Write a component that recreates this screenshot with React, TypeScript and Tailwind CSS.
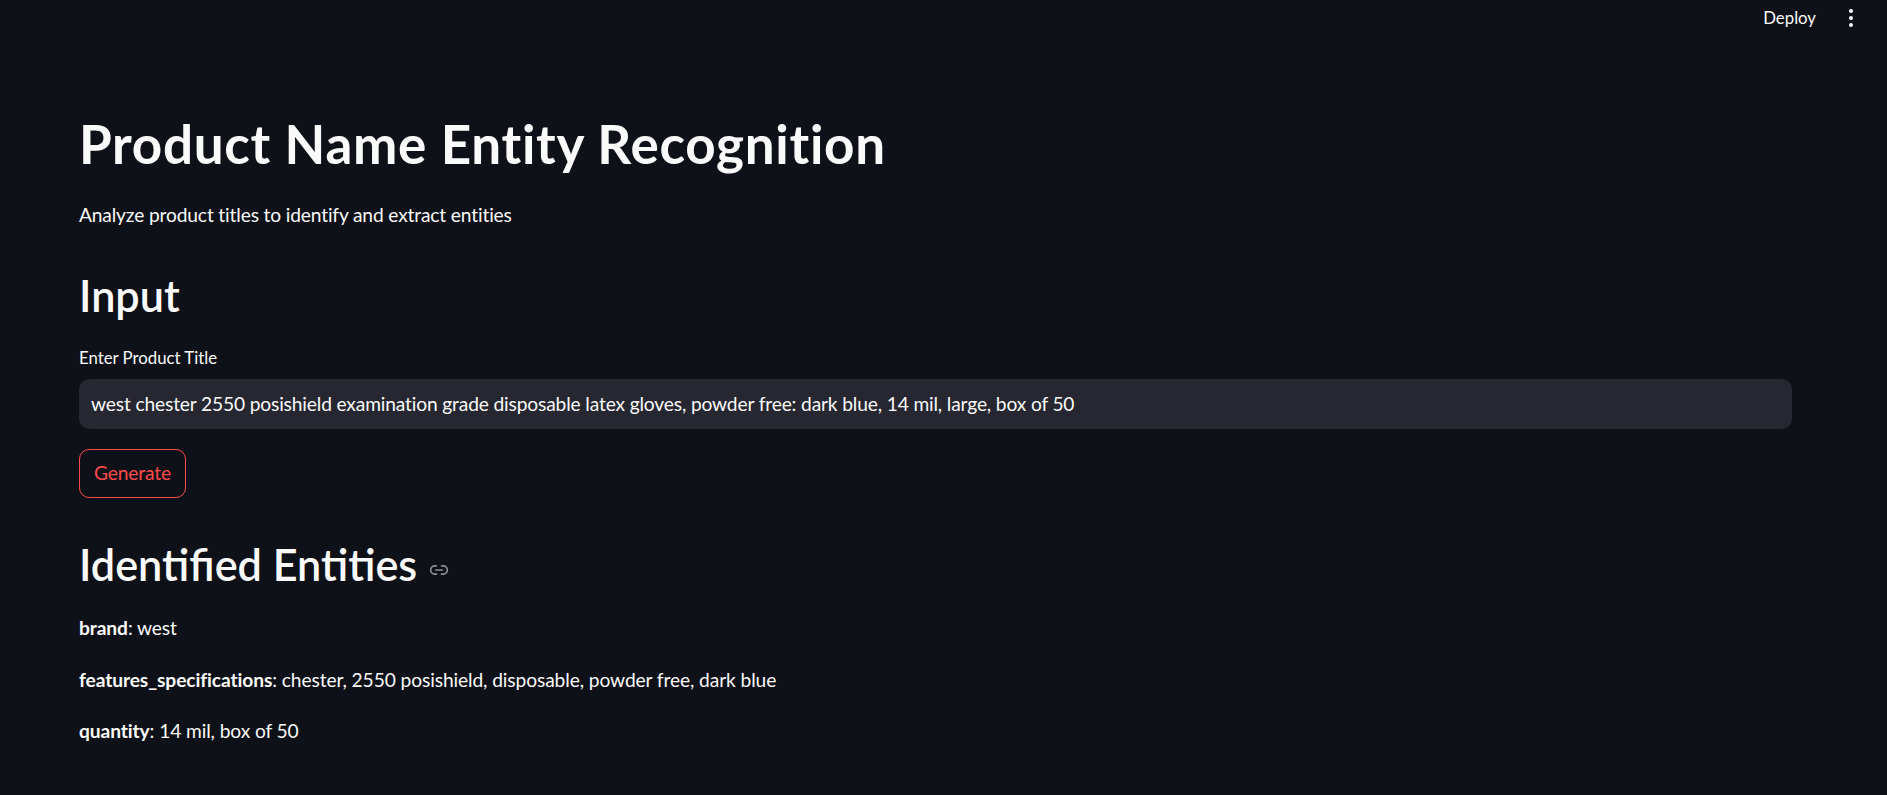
import { Link2 } from "lucide-react"

const entities = [
    { label: "brand", value: "west" },
    { label: "features_specifications", value: "chester, 2550 posishield, disposable, powder free, dark blue" },
    { label: "quantity", value: "14 mil, box of 50" },
]

const Header = () => (
    <header className="flex h-[40px] items-start justify-end pr-[27px] pt-[4px]">
        <button className="h-[28px] px-[8px] text-[16.8px] leading-[28px] text-[#fafafa]">Deploy</button>
        <button className="ml-[18px] flex h-[28px] w-[18px] flex-col items-center justify-center gap-[3px]">
            <span className="h-[4px] w-[4px] rounded-full bg-[#fafafa]" />
            <span className="h-[4px] w-[4px] rounded-full bg-[#fafafa]" />
            <span className="h-[4px] w-[4px] rounded-full bg-[#fafafa]" />
        </button>
    </header>
)

export default function App() {
    return (
        <div className="min-h-screen bg-[#0e1117] font-[Lato,sans-serif] text-[#fafafa]">
            <Header />
            <main className="pl-[79px] pr-[95px]">
                <h1 className="mt-[72px] text-[53px] font-bold leading-[1.2] tracking-[0.7px]">Product Name Entity Recognition</h1>
                <p className="mt-[24px] text-[19.2px] leading-[1.6] tracking-[-0.15px]">Analyze product titles to identify and extract entities</p>

                <h2 className="mt-[40px] text-[43.2px] font-semibold leading-[1.2]">Input</h2>
                <label className="mt-[23px] block text-[16.8px] leading-[1.6]">Enter Product Title</label>
                <div className="mt-[7px] flex h-[50px] items-center rounded-[10px] bg-[#262730] px-[12px] text-[19.2px] tracking-[-0.15px]">
                    west chester 2550 posishield examination grade disposable latex gloves, powder free: dark blue, 14 mil, large, box of 50
                </div>
                <button className="mt-[20px] h-[49px] rounded-[10px] border border-[#ff4b4b] px-[14px] text-[19.2px] tracking-[-0.15px] text-[#ff4b4b]">
                    Generate
                </button>

                <h2 className="mt-[41px] flex items-center text-[43.2px] font-semibold leading-[1.2]">
                    Identified Entities
                    <Link2 className="ml-[12px] mt-[10px] h-[20px] w-[20px] text-[#8b8d98]" strokeWidth={2} />
                </h2>
                <div className="mt-[22px] flex flex-col gap-[21px]">
                    {entities.map((e) => (
                        <p key={e.label} className="text-[19.2px] leading-[1.6] tracking-[-0.1px]">
                            <strong className="font-bold">{e.label}</strong>: {e.value}
                        </p>
                    ))}
                </div>
            </main>
        </div>
    )
}
